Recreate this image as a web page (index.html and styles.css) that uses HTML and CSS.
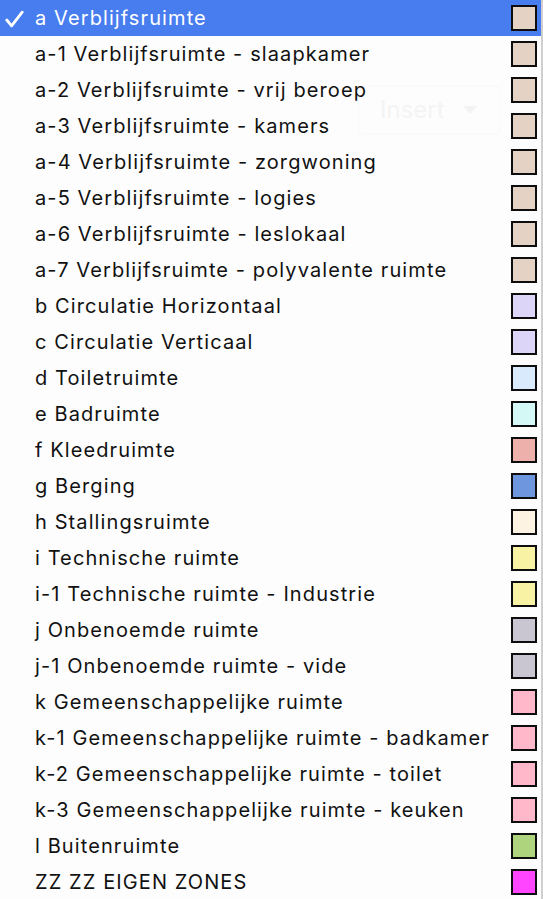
FILE: index.html
```html
<!DOCTYPE html>
<html>
<head>
<meta charset="utf-8">
<link rel="stylesheet" href="styles.css">
</head>
<body>
<div class="menu">
  <div class="ghost"><span class="ghost-text">Insert</span><span class="ghost-caret"></span></div>
  <ul class="list">
    <li class="item selected"><svg class="check" viewBox="0 0 20 20" width="20" height="20"><path d="M2.8 10 L7.6 15.8 L18.2 2.2" fill="none" stroke="#fff" stroke-width="2.8" stroke-linecap="round" stroke-linejoin="round"/></svg><span class="label">a Verblijfsruimte</span><span class="sw" style="background:#e4d2c5"></span></li>
    <li class="item"><span class="label">a-1 Verblijfsruimte - slaapkamer</span><span class="sw" style="background:#e4d2c5"></span></li>
    <li class="item"><span class="label">a-2 Verblijfsruimte - vrij beroep</span><span class="sw" style="background:#e4d2c5"></span></li>
    <li class="item"><span class="label">a-3 Verblijfsruimte - kamers</span><span class="sw" style="background:#e4d2c5"></span></li>
    <li class="item"><span class="label">a-4 Verblijfsruimte - zorgwoning</span><span class="sw" style="background:#e4d2c5"></span></li>
    <li class="item"><span class="label">a-5 Verblijfsruimte - logies</span><span class="sw" style="background:#e4d2c5"></span></li>
    <li class="item"><span class="label">a-6 Verblijfsruimte - leslokaal</span><span class="sw" style="background:#e4d2c5"></span></li>
    <li class="item"><span class="label">a-7 Verblijfsruimte - polyvalente ruimte</span><span class="sw" style="background:#e4d2c5"></span></li>
    <li class="item"><span class="label">b Circulatie Horizontaal</span><span class="sw" style="background:#ddd5f8"></span></li>
    <li class="item"><span class="label">c Circulatie Verticaal</span><span class="sw" style="background:#ddd5f8"></span></li>
    <li class="item"><span class="label">d Toiletruimte</span><span class="sw" style="background:#d9eafc"></span></li>
    <li class="item"><span class="label">e Badruimte</span><span class="sw" style="background:#d3f8f6"></span></li>
    <li class="item"><span class="label">f Kleedruimte</span><span class="sw" style="background:#eeb0ab"></span></li>
    <li class="item"><span class="label">g Berging</span><span class="sw" style="background:#6e96de"></span></li>
    <li class="item"><span class="label">h Stallingsruimte</span><span class="sw" style="background:#fdf3e3"></span></li>
    <li class="item"><span class="label">i Technische ruimte</span><span class="sw" style="background:#f8f2a5"></span></li>
    <li class="item"><span class="label">i-1 Technische ruimte - Industrie</span><span class="sw" style="background:#f8f2a5"></span></li>
    <li class="item"><span class="label">j Onbenoemde ruimte</span><span class="sw" style="background:#c9c6d1"></span></li>
    <li class="item"><span class="label">j-1 Onbenoemde ruimte - vide</span><span class="sw" style="background:#c9c6d1"></span></li>
    <li class="item"><span class="label">k Gemeenschappelijke ruimte</span><span class="sw" style="background:#ffb8c9"></span></li>
    <li class="item"><span class="label">k-1 Gemeenschappelijke ruimte - badkamer</span><span class="sw" style="background:#ffb8c9"></span></li>
    <li class="item"><span class="label">k-2 Gemeenschappelijke ruimte - toilet</span><span class="sw" style="background:#ffb8c9"></span></li>
    <li class="item"><span class="label">k-3 Gemeenschappelijke ruimte - keuken</span><span class="sw" style="background:#ffb8c9"></span></li>
    <li class="item"><span class="label">l Buitenruimte</span><span class="sw" style="background:#aed47d"></span></li>
    <li class="item"><span class="label">ZZ ZZ EIGEN ZONES</span><span class="sw" style="background:#ff45ff"></span></li>
  </ul>
</div>
</body>
</html>
```
FILE: styles.css
```css
html, body {
  margin: 0;
  padding: 0;
  background: #ffffff;
}
.menu {
  position: relative;
  width: 541px;
  height: 899px;
  overflow: hidden;
  background: #fdfdfd;
  border-right: 2px solid #cfcfcf;
  font-family: Inter, "Noto Sans", sans-serif;
  color: #111;
}
.ghost {
  position: absolute;
  left: 358px;
  top: 85px;
  width: 142px;
  height: 49px;
  border: 1px solid #f9f9f9;
  border-radius: 4px;
  display: flex;
  align-items: center;
  gap: 18px;
  padding-left: 21px;
  box-sizing: border-box;
  color: #f4f4f4;
  font-size: 24px;
}
.ghost-caret {
  width: 0;
  height: 0;
  border-left: 7px solid transparent;
  border-right: 7px solid transparent;
  border-top: 8px solid #f3f3f3;
}
.list {
  position: relative;
  list-style: none;
  margin: 0;
  padding: 0;
}
.item {
  display: flex;
  align-items: center;
  height: 36px;
  padding-left: 35px;
  padding-right: 4px;
  font-size: 20px;
  letter-spacing: 1.1px;
  position: relative;
}
.item.selected {
  background: #477def;
  color: #fff;
}
.check {
  position: absolute;
  left: 4px;
  top: 10px;
}
.label {
  flex: 1;
  white-space: nowrap;
}
.sw {
  width: 26px;
  height: 26px;
  box-sizing: border-box;
  border: 2.5px solid #0d0d0d;
  flex: none;
}
```
